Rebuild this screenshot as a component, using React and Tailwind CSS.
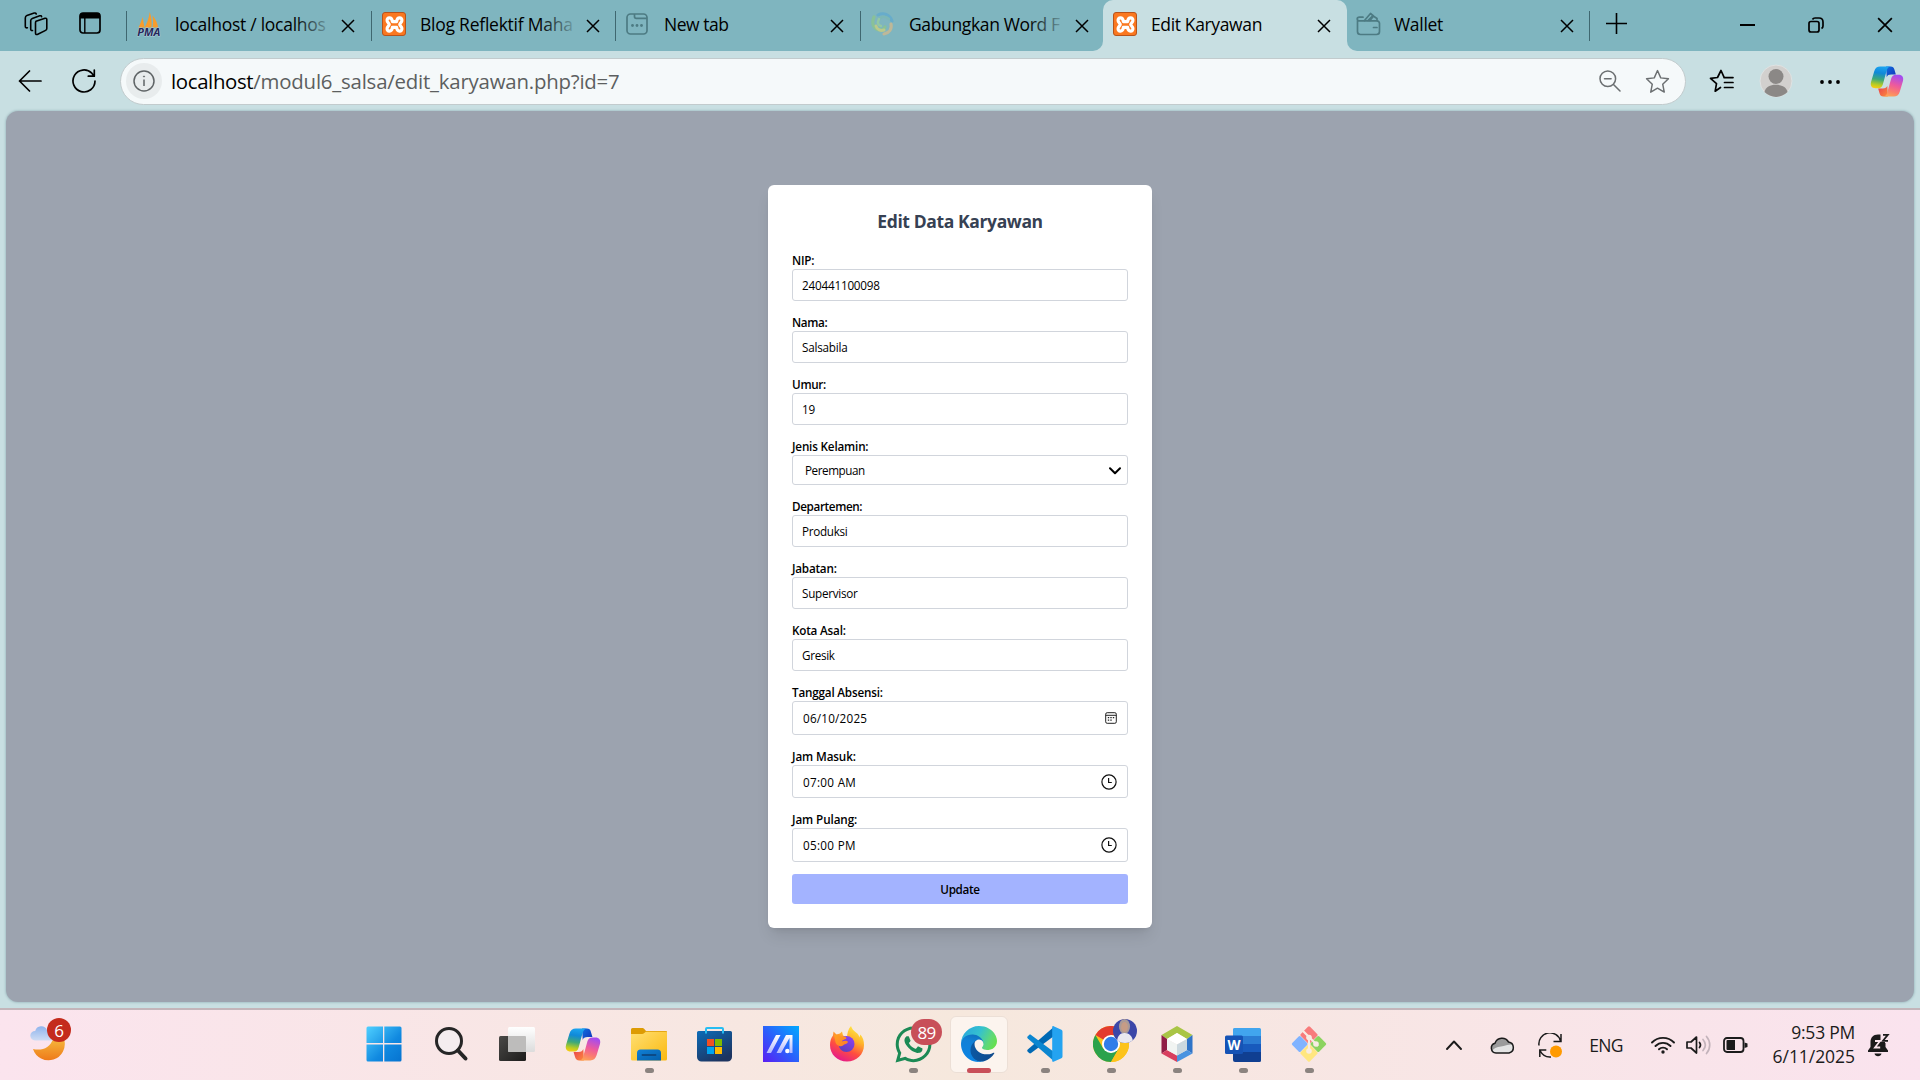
import { FaWhatsapp } from "react-icons/fa";

/* ---------- browser chrome icons ---------- */

const Close = ({ className = "w-[14px] h-[14px]" }) => (
  <svg viewBox="0 0 14 14" className={className} fill="none" stroke="#000" strokeWidth="1.5">
    <path d="M1 1l12 12M13 1L1 13" />
  </svg>
);

const Workspaces = () => (
  <svg viewBox="0 0 24 24" className="h-6 w-6" fill="none" stroke="#000" strokeWidth="1.6" strokeLinejoin="round" strokeLinecap="round">
    <path d="M12 9.3l9-3c1-.3 1.800 .2 1.800 1.200v9c0 .8-.4 1.500-1.200 1.900l-7.800 3.900c-1.200 .6-2.300 .1-2.300-1V11c0-.8 .3-1.400 .5-1.700z" />
    <path d="M8.500 18.500c-1.300 .2-1.800-.4-1.800-1.500V8.800c0-1.200 .5-2 1.600-2.400l7.400-2.600c1-.3 1.700 0 1.900 .8" />
    <path d="M3.400 15.800C2 16 1.300 15.400 1.300 14.200V6c0-1.200 .5-2 1.600-2.400l7.300-2.500c1-.3 1.700 0 2 .8" />
  </svg>
);

const TabActions = () => (
  <svg viewBox="0 0 22 22" className="h-[22px] w-[22px]">
    <rect x="1" y="1" width="20" height="20" rx="3" fill="none" stroke="#000" strokeWidth="1.700" />
    <path d="M1 6.500V3.500A2.500 2.500 0 013.500 1h15A2.500 2.500 0 0121 3.500v3z" fill="#000" />
    <path d="M5.800 6v15" stroke="#000" strokeWidth="1.400" />
  </svg>
);

const PmaIcon = () => (
  <svg viewBox="0 0 24 24" className="h-6 w-6 overflow-visible">
    <path d="M1.500 15.500C3 13 4.500 9 5.500 5l2 10.500zM7.500 15.500c2-3 4.500-9.500 5.200-15.500 1.800 5 2.300 10.500 1.800 15.500zM15.500 15.500c.6-3.500 .8-8 0-12 3 3.500 5.200 8 5.700 12z" fill="#f89c2c" />
    <text x=".3" y="23.500" fontSize="10" fontWeight="700" fontStyle="italic" fontFamily="Open Sans, sans-serif" fill="#26285c" stroke="#dfe6ee" strokeWidth=".5" paintOrder="stroke" textLength="23" lengthAdjust="spacingAndGlyphs">PMA</text>
  </svg>
);

const XamppIcon = () => (
  <span className="flex h-6 w-6 items-center justify-center rounded-[3px] border border-[#b8531a] bg-[#fa7820]">
    <svg viewBox="0 0 18 18" className="h-[19px] w-[19px]" fill="none" stroke="#fff" strokeWidth="3" strokeLinejoin="round">
      <path d="M7 6.300C6.500 1.500 1.500 2 2 5.500 2.300 7.500 3.800 7.500 4 9c-.2 1.500-1.700 1.500-2 3.500-.5 3.500 4.500 4 5-.8h4c.5 4.800 5.500 4.300 5 .8-.3-2-1.800-2-2-3.500 .2-1.500 1.700-1.500 2-3.500C16.500 2 11.500 1.500 11 6.300z" />
    </svg>
  </span>
);

const NewTabIcon = () => (
  <svg viewBox="0 0 24 24" className="h-6 w-6" fill="none" stroke="#4d7b83" strokeWidth="1.700">
    <rect x="1" y="2" width="20" height="20" rx="3.500" />
    <path d="M8.500 2v2.500c0 1.200 .7 1.800 1.800 1.800h10.500" />
    <g fill="#4d7b83" stroke="none"><circle cx="6.500" cy="13.500" r="1.400" /><circle cx="11" cy="13.500" r="1.400" /><circle cx="15.500" cy="13.500" r="1.400" /></g>
  </svg>
);

const SwirlIcon = () => (
  <svg viewBox="0 0 24 24" className="h-6 w-6" fill="none" strokeLinecap="round" opacity=".75">
    <path d="M3 5C0 12 3 18 9 18c3 0 4.500-1.500 5-3" stroke="#8dc58b" strokeWidth="3.200" />
    <path d="M5 14c1 4 5 5 8 4" stroke="#cfd07a" strokeWidth="3" />
    <path d="M7 3c6-3 12 0 14 6" stroke="#5fa9cf" strokeWidth="3" />
    <path d="M8 8c1-4 7-4 10-1" stroke="#7cb8b4" strokeWidth="2.500" />
    <path d="M20 12c1 5-2 9-7 10" stroke="#d3b98c" strokeWidth="3.200" />
    <path d="M8 7c-2 4-1 6 2 7" stroke="#9ccf9c" strokeWidth="2.500" />
  </svg>
);

const WalletIcon = () => (
  <svg viewBox="0 0 26 24" className="h-6 w-[26px]" fill="none" stroke="#4d7b83" strokeWidth="1.700" strokeLinejoin="round" strokeLinecap="round">
    <path d="M1.500 8.500v11c0 2 1 3 3 3h16c2 0 3-1 3-3v-8c0-1.700-1-2.700-2.700-2.700H3.500C2 8.800 1.200 8 1.200 7S2 5.200 3.500 5.200H7" />
    <path d="M8.500 8.500l6-7 3 2.500-3.500 4.500M12 8.500l4-4M18 4.500l3 2v2M17.500 15.500h3.500" />
  </svg>
);

const CopilotIcon = ({ className, id }) => (
  <svg viewBox="0 0 36 34" className={className}>
    <defs>
      <linearGradient id={`${id}a`} x1=".5" y1="0" x2=".35" y2="1">
        <stop offset="0" stopColor="#1ba4f0" /><stop offset=".3" stopColor="#1089d8" /><stop offset=".6" stopColor="#3fa978" /><stop offset=".85" stopColor="#b9cc22" /><stop offset="1" stopColor="#f5cc12" />
      </linearGradient>
      <linearGradient id={`${id}b`} x1=".6" y1="0" x2=".3" y2="1">
        <stop offset="0" stopColor="#a34cf0" /><stop offset=".45" stopColor="#ee5a9c" /><stop offset=".75" stopColor="#fa7d6e" /><stop offset="1" stopColor="#fda456" />
      </linearGradient>
      <linearGradient id={`${id}c`} x1="0" y1="0" x2="1" y2="1">
        <stop offset="0" stopColor="#0f6fe0" /><stop offset="1" stopColor="#1333b8" />
      </linearGradient>
      <linearGradient id={`${id}d`} x1="0" y1="0" x2="1" y2="1">
        <stop offset="0" stopColor="#e83d50" /><stop offset="1" stopColor="#fd8b3c" />
      </linearGradient>
    </defs>
    <path d="M17 .5h5c2.300 0 3.500 1 4.200 3.500l1.500 5.300h-5c-3 0-4.200 .8-5 3z" fill={`url(#${id}c)`} />
    <path d="M19 33.500h-5c-2.300 0-3.500-1-4.200-3.500l-1.500-5.300h5c3 0 4.200-.8 5-3z" fill={`url(#${id}d)`} />
    <path d="M10.500 .5H22c-2.500 .3-3.600 2-4.500 5l-4 14.500c-.9 3-2.400 4.300-5.400 4.300H5.300C1.200 24.300-.5 21.500 .5 17.500L4 5.800C5.200 2 7.300 .5 10.500 .5z" fill={`url(#${id}a)`} />
    <path d="M25.500 33.500H14c2.500-.3 3.600-2 4.500-5l4-14.500c.9-3 2.400-4.300 5.400-4.300h2.800c4.100 0 5.800 2.800 4.800 6.800L32 28.200c-1.200 3.800-3.300 5.300-6.500 5.300z" fill={`url(#${id}b)`} />
  </svg>
);

const STAR = "M12 1.500l3.100 7 7.400 .9-5.500 5.200 1.500 7.600L12 18.400l-6.500 3.800 1.500-7.600L1.500 9.400l7.400-.9z";

/* ---------- tab strip ---------- */

function Tab({ icon, title, tracking, fade }) {
  return (
    <div className="flex h-full w-full items-center pb-[3px] pl-[10px]">
      <span className="flex w-[38px] shrink-0">{icon}</span>
      <span className={`relative mb-px w-[155px] shrink-0 overflow-hidden whitespace-nowrap text-[17.5px] leading-6 text-black ${tracking}`}>
        {title}
        {fade && <span className="absolute inset-y-0 right-0 w-9 bg-gradient-to-r from-[#7fb5bf]/0 to-[#7fb5bf]/90" />}
      </span>
      <span className="ml-[11px] mt-[3px]"><Close /></span>
    </div>
  );
}

const Divider = () => <span className="mt-[11px] h-[30px] w-px shrink-0 bg-[#3f6770]" />;

function TabStrip() {
  return (
    <div className="flex h-[51px] bg-[#c8dfe2]">
      <div className="flex w-[1103px] rounded-br-[10px] bg-[#7fb5bf]">
        <div className="flex w-[126px] shrink-0 items-start gap-[31px] pl-6 pt-3">
          <Workspaces />
          <TabActions />
        </div>
        <Divider />
        <div className="w-[244px]"><Tab icon={<PmaIcon />} title="localhost / localhos" tracking="tracking-[-0.26px]" fade /></div>
        <Divider />
        <div className="w-[243px]"><Tab icon={<XamppIcon />} title="Blog Reflektif Maha" tracking="tracking-[-0.24px]" fade /></div>
        <Divider />
        <div className="w-[244px]"><Tab icon={<NewTabIcon />} title="New tab" tracking="tracking-[-0.46px]" /></div>
        <Divider />
        <div className="w-[242px]"><Tab icon={<SwirlIcon />} title="Gabungkan Word F" tracking="tracking-[-0.36px]" fade /></div>
      </div>
      <div className="w-[244px] bg-[#7fb5bf]">
        <div className="h-full rounded-t-[10px] bg-[#c8dfe2]">
          <Tab icon={<XamppIcon />} title="Edit Karyawan" tracking="tracking-[-0.36px]" />
        </div>
      </div>
      <div className="flex flex-1 rounded-bl-[10px] bg-[#7fb5bf]">
        <div className="-ml-px w-[243px]">
          <Tab icon={<WalletIcon />} title="Wallet" tracking="tracking-[-0.3px]" />
        </div>
        <Divider />
        <svg viewBox="0 0 21 21" className="ml-4 mt-[13px] h-[21px] w-[21px]" stroke="#000" strokeWidth="1.600"><path d="M0 10.500h21M10.500 0v21" /></svg>
        <div className="mr-[27px] mt-[17px] flex flex-1 items-start justify-end">
          <svg viewBox="0 0 15 16" className="mr-[53px] h-4 w-[15px]" stroke="#000" strokeWidth="2"><path d="M0 8h15" /></svg>
          <svg viewBox="0 0 16 16" className="mr-[53px] h-4 w-4" fill="none" stroke="#000" strokeWidth="1.700">
            <rect x="1" y="4.500" width="10" height="10.500" rx="2" />
            <path d="M4.500 2.500C5 1.500 6 1 7 1h4c2.500 0 4 1.500 4 4v4c0 1.200-.6 2-1.500 2.500" />
          </svg>
          <Close className="h-4 w-4" />
        </div>
      </div>
    </div>
  );
}

/* ---------- toolbar ---------- */

function Toolbar() {
  return (
    <div className="flex h-[60px] items-center bg-[#c8dfe2] pl-[18px] pr-4">
      <svg viewBox="0 0 24 22" className="h-[22px] w-6" fill="none" stroke="#000" strokeWidth="1.700" strokeLinecap="round" strokeLinejoin="round"><path d="M23 11H1.500M11.500 1L1.500 11l10 10" /></svg>
      <svg viewBox="0 0 24 24" className="ml-[30px] h-6 w-6" fill="none" stroke="#000" strokeWidth="1.700" strokeLinecap="round" strokeLinejoin="round"><path d="M23 12a11 11 0 11-3.200-7.800L22 7M22.300 1v6.200h-6" /></svg>
      <div className="ml-6 flex h-[47px] w-[1566px] items-center rounded-full border-[1.5px] border-[#c2cbcd] bg-[#f5f9fa] pl-[5px] pr-[15px]">
        <span className="flex h-9 w-9 items-center justify-center rounded-full bg-[#e8eced]">
          <svg viewBox="0 0 22 22" className="h-[22px] w-[22px]" fill="none" stroke="#5f6466" strokeWidth="1.500"><circle cx="11" cy="11" r="10" /><path d="M11 9.500v6.500" /><circle cx="11" cy="6.500" r=".6" fill="#5f6466" strokeWidth=".8" /></svg>
        </span>
        <span className="ml-[9px] flex-1 whitespace-nowrap text-[20.4px] leading-7 tracking-[-0.2px] text-[#5c5f60]">
          <span className="tracking-[-0.35px] text-black">localhost</span>/modul6_salsa/edit_karyawan.php?id=7
        </span>
        <svg viewBox="0 0 22 22" className="h-[22px] w-[22px]" fill="none" stroke="#6b6f71" strokeWidth="1.500" strokeLinecap="round"><circle cx="8.800" cy="8.800" r="7.800" /><path d="M14.500 14.500l6.500 6.500M5.500 8.800h6.600" /></svg>
        <svg viewBox="0 0 24 24" className="ml-[24px] h-[25px] w-[25px]" fill="none" stroke="#6b6f71" strokeWidth="1.400" strokeLinejoin="round"><path d={STAR} /></svg>
      </div>
      <svg viewBox="0 0 25 24" className="ml-[23px] h-6 w-[25px]" fill="none" stroke="#000" strokeWidth="1.700" strokeLinejoin="round" strokeLinecap="round">
        <path d="M11.500 18.500l-5.300 3.700 1.300-7.500L1.500 9.400l7-.9L12 1.500l3 6.700M15 8.600h9M15.500 13.500H24M15.500 18.500H24" />
      </svg>
      <svg viewBox="0 0 34 34" className="ml-[25px] h-[34px] w-[34px]">
        <circle cx="17" cy="17" r="16" fill="#d2d0ce" stroke="#dfe3e3" />
        <circle cx="17" cy="12.500" r="7.500" fill="#8b8886" />
        <path d="M5.500 28c1-5 5.500-7.200 11.500-7.200S27.500 23 28.500 28a16 16 0 01-23 0z" fill="#8b8886" />
      </svg>
      <svg viewBox="0 0 22 6" className="ml-[26px] mt-[2px] h-[6px] w-[22px]" fill="#000"><circle cx="3" cy="3" r="1.900" /><circle cx="11" cy="3" r="1.900" /><circle cx="19" cy="3" r="1.900" /></svg>
      <CopilotIcon id="tb" className="ml-[29px] h-[31px] w-[34px]" />
    </div>
  );
}

/* ---------- form ---------- */

const Calendar = () => (
  <svg viewBox="0 0 12 12" className="mr-[10px] h-3 w-3" fill="none" stroke="#222" strokeWidth="1">
    <rect x=".7" y=".7" width="10.600" height="10.600" rx="1.500" /><path d="M.7 3.300h10.600" />
    <path d="M2.800 5.700h1.400M5.300 5.700h1.400M7.800 5.700h1.400M2.800 8.200h1.400M5.300 8.200h1.400" strokeWidth="1.300" />
  </svg>
);

const Clock = () => (
  <svg viewBox="0 0 16 16" className="mr-[10px] h-4 w-4" fill="none" stroke="#111" strokeWidth="1.200">
    <circle cx="8" cy="8" r="7.100" /><path d="M7.600 4v4.500h3.200" />
  </svg>
);

const Chevron = () => (
  <svg viewBox="0 0 12 8" className="mr-[6px] mt-px h-2 w-3" fill="none" stroke="#000" strokeWidth="2" strokeLinecap="round" strokeLinejoin="round"><path d="M1 1.300l5 5 5-5" /></svg>
);

const FIELDS = [
  { label: "NIP:", lt: "tracking-[-0.25px]", value: "240441100098", vt: "pl-[9px] tracking-[-0.2px]", h: "h-8" },
  { label: "Nama:", lt: "tracking-[-0.35px]", value: "Salsabila", vt: "pl-[9px] tracking-[-0.22px]", h: "h-8" },
  { label: "Umur:", lt: "tracking-[-0.3px]", value: "19", vt: "pl-[9px] tracking-[-0.2px]", h: "h-8" },
  { label: "Jenis Kelamin:", lt: "tracking-[-0.18px]", value: "Perempuan", vt: "pl-3 tracking-[-0.45px]", h: "h-[30px]", icon: <Chevron /> },
  { label: "Departemen:", lt: "tracking-[-0.37px]", value: "Produksi", vt: "pl-[9px] tracking-[-0.3px]", h: "h-8" },
  { label: "Jabatan:", lt: "tracking-[-0.22px]", value: "Supervisor", vt: "pl-[9px] tracking-[-0.27px]", h: "h-8" },
  { label: "Kota Asal:", lt: "tracking-[-0.2px]", value: "Gresik", vt: "pl-[9px] tracking-[-0.3px]", h: "h-8" },
  { label: "Tanggal Absensi:", lt: "tracking-[-0.19px]", value: "06/10/2025", vt: "pl-[10px] tracking-[0.22px]", h: "h-[34px]", icon: <Calendar /> },
  { label: "Jam Masuk:", lt: "tracking-[-0.12px]", value: "07:00 AM", vt: "pl-[10px] tracking-[0.3px]", h: "h-[33px]", icon: <Clock /> },
  { label: "Jam Pulang:", lt: "tracking-[-0.1px]", value: "05:00 PM", vt: "pl-[10px] tracking-[0.3px]", h: "h-[34px]", icon: <Clock /> },
];

function EditForm() {
  return (
    <form className="flex w-96 flex-col rounded-md bg-white p-6 shadow-lg">
      <h2 className="mb-[18px] text-center text-[17.5px] font-bold leading-6 tracking-[-0.38px] text-gray-700">Edit Data Karyawan</h2>
      <div className="flex flex-col gap-3">
        {FIELDS.map((f) => (
          <div key={f.label}>
            <div className={`h-[18px] text-[11.7px] font-semibold leading-[19px] text-black ${f.lt}`}>{f.label}</div>
            <div className={`flex items-center justify-between rounded-[3px] border border-gray-300 bg-white ${f.h}`}>
              <span className={`text-[11.7px] leading-4 text-black ${f.vt}`}>{f.value}</span>
              {f.icon}
            </div>
          </div>
        ))}
        <button type="button" className="h-[30px] rounded-[3px] bg-indigo-300 pt-[2px] text-[11.7px] font-semibold tracking-[-0.35px] text-black">Update</button>
      </div>
    </form>
  );
}

/* ---------- taskbar icons ---------- */

const Weather = () => (
  <div className="relative ml-[30px] mt-[8px] h-[44px] w-[42px]">
    <svg viewBox="0 0 42 44" className="h-[44px] w-[42px]">
      <defs>
        <linearGradient id="moon" x1="0" y1="0" x2="0" y2="1"><stop offset="0" stopColor="#f6b73c" /><stop offset="1" stopColor="#ee7a1a" /></linearGradient>
        <linearGradient id="cloud" x1="0" y1="0" x2="0" y2="1"><stop offset="0" stopColor="#8fb4ec" /><stop offset="1" stopColor="#cfdcf4" /></linearGradient>
      </defs>
      <path d="M3 31c9 2 17-1 20-10h11a15.500 15.500 0 01-31 10z" fill="url(#moon)" />
      <path d="M5 22.500a4.800 4.800 0 01.200-9.600A6.300 6.300 0 0117 12l6 10.500z" fill="url(#cloud)" />
    </svg>
    <span className="absolute left-[17px] top-0 flex h-6 w-6 items-center justify-center rounded-full bg-[#c42b1c] text-[17px] leading-none text-white">6</span>
  </div>
);

const StartIcon = () => (
  <svg viewBox="0 0 36 36" className="-ml-[3px] h-9 w-9">
    <defs><linearGradient id="win" x1="0" y1="0" x2="1" y2="1"><stop offset="0" stopColor="#4fd0ff" /><stop offset=".6" stopColor="#1089e0" /><stop offset="1" stopColor="#0673d0" /></linearGradient></defs>
    <path d="M2 .5h15v16.500H.5V2A1.500 1.500 0 012 .5zM18.300 .5H34A1.500 1.500 0 0135.500 2v15H18.300zM.5 18.500H17v17H2A1.500 1.500 0 01.5 34zM18.300 18.500h17.200V34a1.500 1.500 0 01-1.500 1.500H18.300z" fill="url(#win)" />
  </svg>
);

const SearchIcon = () => (
  <svg viewBox="0 0 36 36" className="h-9 w-9" fill="none" stroke="#262626" strokeLinecap="round">
    <circle cx="16" cy="15" r="12.500" fill="#f4edef" strokeWidth="3" /><path d="M25 24.500l7.500 8" strokeWidth="4" />
  </svg>
);

const TaskView = () => (
  <svg viewBox="0 0 36 36" className="h-9 w-9">
    <defs>
      <linearGradient id="tvd" x1="0" y1="0" x2="1" y2="1"><stop offset="0" stopColor="#4a4947" /><stop offset="1" stopColor="#1d1c1b" /></linearGradient>
      <linearGradient id="tvl" x1="0" y1="0" x2="0" y2="1"><stop offset="0" stopColor="#fff" /><stop offset="1" stopColor="#dcdcdc" /></linearGradient>
    </defs>
    <rect x="0" y="10" width="27" height="25" rx="1.500" fill="url(#tvd)" />
    <rect x="9" y="1" width="27" height="25" rx="1.500" fill="url(#tvl)" />
    <path d="M9 10h17a1 1 0 011 1v15H10.500A1.500 1.500 0 019 24.500z" fill="#bdbcbb" />
  </svg>
);

const Explorer = () => (
  <svg viewBox="0 0 36 36" className="h-9 w-9">
    <defs><linearGradient id="fold" x1="0" y1="0" x2="1" y2="1"><stop offset="0" stopColor="#ffdf73" /><stop offset="1" stopColor="#fbb90f" /></linearGradient>
      <linearGradient id="drawer" x1="0" y1="0" x2="1" y2="1"><stop offset="0" stopColor="#1180d6" /><stop offset="1" stopColor="#0560ac" /></linearGradient></defs>
    <path d="M0 3.500A1.500 1.500 0 011.500 2H11c1 0 1.600 .3 2.300 1L15 5h20a1 1 0 011 1v4H0z" fill="#dd9b04" />
    <path d="M0 8h10.500c1.200 0 2-.3 2.800-1.100L14.800 5.800H35a1 1 0 011 1V33a1.500 1.500 0 01-1.500 1.500h-33A1.500 1.500 0 010 33z" fill="url(#fold)" />
    <path d="M6 34.500V27a3.500 3.500 0 013.500-3.500h17A3.500 3.500 0 0130 27v7.500z" fill="url(#drawer)" />
    <path d="M11.500 29h13" stroke="#0c4a86" strokeWidth="1.800" strokeLinecap="round" />
  </svg>
);

const Store = () => (
  <svg viewBox="0 0 36 36" className="h-9 w-9">
    <defs><linearGradient id="store" x1="0" y1="0" x2=".6" y2="1"><stop offset="0" stopColor="#0c6cb8" /><stop offset="1" stopColor="#1d3460" /></linearGradient></defs>
    <path d="M1.500 5h32a1.500 1.500 0 011.500 1.500V31a4.500 4.500 0 01-4.500 4.500h-26A4.500 4.500 0 010 31V6.500A1.500 1.500 0 011.500 5z" fill="url(#store)" />
    <path d="M9 7.500V3a1 1 0 011-1h15a1 1 0 011 1v4.500" fill="none" stroke="#27bdf2" strokeWidth="2" />
    <path d="M10 13h7v7h-7z" fill="#f25022" /><path d="M18 13h7v7h-7z" fill="#7fba00" /><path d="M10 21h7v7h-7z" fill="#00a4ef" /><path d="M18 21h7v7h-7z" fill="#ffb900" />
  </svg>
);

const MyAsus = () => (
  <svg viewBox="0 0 36 36" className="h-9 w-9">
    <defs><linearGradient id="asus" x1="0" y1="1" x2="1" y2="0"><stop offset="0" stopColor="#5b1df2" /><stop offset=".45" stopColor="#2e5bfb" /><stop offset="1" stopColor="#00aaff" /></linearGradient>
      <linearGradient id="asw" x1="0" y1="1" x2="0" y2="0"><stop offset="0" stopColor="#b3b9ff" /><stop offset="1" stopColor="#fff" /></linearGradient></defs>
    <path d="M0 0h36v36H0z" fill="url(#asus)" />
    <path d="M3.500 27L13 9h4.500L8 27zM13.500 27L23 9h6.500v18h-3V12L18 27z" fill="url(#asw)" />
    <circle cx="24.300" cy="25" r="2.200" fill="#fff" />
  </svg>
);

const Firefox = () => (
  <svg viewBox="0 0 36 36" className="h-9 w-9">
    <defs>
      <linearGradient id="ff" x1=".8" y1="0" x2=".3" y2="1"><stop offset="0" stopColor="#fff04a" /><stop offset=".35" stopColor="#ffb22a" /><stop offset=".65" stopColor="#ff4f3f" /><stop offset="1" stopColor="#e4178f" /></linearGradient>
      <linearGradient id="ffp" x1=".8" y1="0" x2=".2" y2="1"><stop offset="0" stopColor="#8f3ff5" /><stop offset="1" stopColor="#5a3fb8" /></linearGradient>
      <linearGradient id="ffo" x1="0" y1="0" x2="1" y2="1"><stop offset="0" stopColor="#ffa21f" /><stop offset="1" stopColor="#ff7a2a" /></linearGradient>
    </defs>
    <path d="M22 0c1 3 2.500 4.500 5 6.500 2.500 1.800 3.300 3.800 3.500 5l.8-3C34 11 35 15 35 19c0 9.500-7.500 16.500-17 16.500S1 28.500 1 19c0-4 1-7 3-9.500l.5-4 3 3 3.500-1 2-2 1 4c2 .5 3 1.500 4 2.500 0-4 1-9 4-12z" fill="url(#ff)" />
    <circle cx="17.500" cy="18" r="8" fill="url(#ffp)" />
    <path d="M5 9c3-.5 5 0 7 1.500 2.500-.5 5 .5 5.500 1.500-.5 1.500-4 1.500-4.500 3.500 2-1 5.500-1 6 .5-1 2.500-3.500 1.500-5 3.500-2 2-7 0-7.500-3.500z" fill="url(#ffo)" />
  </svg>
);

const WhatsApp = () => (
  <div className="relative h-9 w-9">
    <FaWhatsapp className="-ml-[2px] -mt-[2px] h-[41px] w-[41px] text-[#1b8a55]" />
    <span className="absolute -top-[7px] left-[16px] flex h-[26px] w-[31px] items-center justify-center rounded-full bg-[#c84f59] text-[17px] leading-none tracking-[-0.6px] text-white">89</span>
  </div>
);

const Edge = () => (
  <svg viewBox="0 0 256 256" className="h-9 w-9">
    <defs>
      <linearGradient id="e1" x1="0" y1=".5" x2="1" y2=".5"><stop offset="0" stopColor="#0c59a4" /><stop offset="1" stopColor="#114a8b" /></linearGradient>
      <linearGradient id="e2" x1=".6" y1="0" x2=".4" y2="1"><stop offset="0" stopColor="#0f6fb8" /><stop offset=".3" stopColor="#1180d6" /><stop offset="1" stopColor="#0b84e4" /></linearGradient>
      <linearGradient id="e3" x1="0" y1=".3" x2="1" y2=".65"><stop offset="0" stopColor="#2aa8dc" /><stop offset=".45" stopColor="#35c1cf" /><stop offset=".8" stopColor="#5fd977" /><stop offset="1" stopColor="#66e04e" /></linearGradient>
    </defs>
    <path fill="url(#e1)" d="M231 190.500c-3.400 1.800-6.900 3.400-10.500 4.700-11.500 4.300-23.600 6.500-35.900 6.500-47.300 0-88.500-32.500-88.500-74.300.1-11.400 6.400-21.900 16.400-27.300-42.800 1.800-53.800 46.400-53.800 72.500 0 73.900 68.100 81.400 82.800 81.400 7.900 0 19.800-2.300 27-4.600l1.300-.4c27.600-9.500 51-28.100 66.600-52.800 1.200-1.900.6-4.300-1.200-5.500-1.300-.8-2.900-.9-4.200-.2z" />
    <path fill="url(#e2)" d="M105.700 241.400c-8.900-5.500-16.600-12.800-22.700-21.300-26.300-36-18.400-86.500 17.600-112.800 3.800-2.700 7.700-5.200 11.900-7.200 3.100-1.500 8.400-4.100 15.500-4 10.100.1 19.600 4.900 25.700 13 4 5.400 6.300 11.900 6.400 18.700 0-.2 24.500-79.600-80-79.600-43.900 0-80 41.700-80 78.200-.2 19.300 4 38.500 12.100 56 27.600 58.800 94.800 87.600 156.400 67.100-21.100 6.600-44.100 3.700-62.900-8.100z" />
    <path fill="url(#e3)" d="M152.300 148.900c-.8 1-3.300 2.500-3.300 5.700 0 2.600 1.700 5.100 4.700 7.200 14.400 10 41.500 8.700 41.600 8.700 10.700 0 21.100-2.900 30.300-8.300 18.800-11 30.400-31.100 30.400-52.900.3-22.400-8-37.300-11.300-43.900C223.500 23.900 177.700 0 128 0 58 0 1 56.200 0 126.200c.5-36.500 36.800-66 80-66 3.500 0 23.500.3 42 10.100 16.300 8.600 24.900 18.900 30.800 29.200 6.200 10.700 7.300 24.100 7.300 29.500-.1 5.300-2.800 13.300-7.800 19.900z" />
  </svg>
);

const VsCode = () => (
  <svg viewBox="0 0 36 36" className="h-9 w-9">
    <path d="M.8 23.500a1.600 1.600 0 000 2.300l1.300 1.200c.6 .5 1.400 .5 2 .1L27 10V.8z" fill="#0069b4" />
    <path d="M.8 12.500a1.600 1.600 0 010-2.300L2.100 9c.6-.5 1.400-.5 2-.1L27 26v9.200z" fill="#0b86d0" />
    <path d="M26.500 35.700c-.8 .3-1.300-.2-1.300-1V1.300c0-.9 .6-1.400 1.400-1.100l7.800 3.600A2 2 0 0135.500 5.600v24.800a2 2 0 01-1.100 1.800z" fill="#24a3f0" />
  </svg>
);

const Chrome = () => (
  <div className="relative h-9 w-9">
    <svg viewBox="0 0 36 36" className="h-9 w-9">
      <circle cx="18" cy="18" r="18" fill="#fcc31c" />
      <path d="M18 18L2.400 9A18 18 0 0133.600 9H18z" fill="#e33b2e" />
      <path d="M2.400 9l7.800 13.500L18 27l7.800-4.500L18 36A18 18 0 012.400 9z" fill="#2ba24c" />
      <path d="M25.800 22.500L18 36A18 18 0 0033.600 9H18z" fill="#fcc31c" />
      <circle cx="18" cy="18" r="9" fill="#fff" /><circle cx="18" cy="18" r="7.200" fill="#2f7de9" />
    </svg>
    <svg viewBox="0 0 24 24" className="absolute -top-[7px] left-5 h-6 w-6">
      <defs><clipPath id="avatar"><circle cx="12" cy="12" r="12" /></clipPath></defs>
      <g clipPath="url(#avatar)">
        <path d="M0 0h24v24H0z" fill="#3c47a8" />
        <ellipse cx="11.500" cy="7.500" rx="5.500" ry="7.500" fill="#a99a98" />
        <path d="M4 24c0-7 3-10 7.500-10S20 17 20 24z" fill="#e9e8ef" />
        <ellipse cx="11.500" cy="8" rx="3.400" ry="5" fill="#c69c86" />
      </g>
    </svg>
  </div>
);

const NetBeans = () => (
  <svg viewBox="0 0 36 36" className="h-9 w-9">
    <path d="M18 0l15.500 9-5.500 4-10-6-10 6-5.500-4z" fill="#a9c545" />
    <path d="M2.500 9L8 13v11l-5.500 3.500z" fill="#8f1d45" />
    <path d="M2.500 27.500L8 24l10 5.500V36z" fill="#d83f5f" />
    <path d="M33.500 9L28 13v11l5.500 3.500z" fill="#2f74c8" />
    <path d="M33.500 27.500L28 24l-10 5.500V36z" fill="#4a93e0" />
    <path d="M18 7l10 6-10 5.500L8 13z" fill="#fff" /><path d="M8 13l10 5.500v11L8 24z" fill="#f1f4f2" /><path d="M28 13l-10 5.500v11L28 24z" fill="#cbd8df" />
  </svg>
);

const Word = () => (
  <svg viewBox="0 0 36 36" className="h-9 w-9">
    <path d="M10 2h24.500A1.500 1.500 0 0136 3.500V10H8V3.500A1.500 1.500 0 0110 2z" fill="#41a5ee" /><path d="M8 10h28v8H8z" fill="#2b7cd3" /><path d="M8 18h28v8H8z" fill="#185abd" /><path d="M8 26h28v8.500a1.500 1.500 0 01-1.500 1.500H10a2 2 0 01-2-2z" fill="#103f91" />
    <rect x="0" y="9.500" width="18" height="18.500" rx="1.500" fill="#1553b5" />
    <text x="9" y="23.500" textAnchor="middle" fontSize="13.500" fontWeight="700" fontFamily="Open Sans, sans-serif" fill="#fff">W</text>
  </svg>
);

const GitBash = () => (
  <svg viewBox="0 0 36 36" className="h-9 w-9">
    <rect x="-6.500" y="-6.500" width="13" height="13" rx="1.500" transform="translate(18 9) rotate(45)" fill="#f87b7b" />
    <rect x="-6" y="-6" width="12" height="12" rx="1.500" transform="translate(8.700 18) rotate(45)" fill="#80b3ff" />
    <rect x="-6" y="-6" width="12" height="12" rx="1.500" transform="translate(27.300 18) rotate(45)" fill="#8cd35f" />
    <rect x="-6.500" y="-6.500" width="13" height="13" rx="1.500" transform="translate(18 27) rotate(45)" fill="#ffe680" />
    <path d="M11.500 4.500L27 20M18 11v15" stroke="#f8ebe2" strokeWidth="2.200" fill="none" />
    <circle cx="18" cy="11.500" r="2.800" fill="#f8ebe2" /><circle cx="25" cy="18" r="2.800" fill="#f8ebe2" /><circle cx="18" cy="25" r="2.800" fill="#f8ebe2" />
  </svg>
);

const APPS = [
  { name: "start", icon: <StartIcon /> },
  { name: "search", icon: <SearchIcon /> },
  { name: "taskview", icon: <TaskView /> },
  { name: "copilot", icon: <CopilotIcon id="task" className="h-[33px] w-9" /> },
  { name: "explorer", icon: <Explorer />, running: true },
  { name: "store", icon: <Store /> },
  { name: "myasus", icon: <MyAsus /> },
  { name: "firefox", icon: <Firefox /> },
  { name: "whatsapp", icon: <WhatsApp />, running: true },
  { name: "edge", icon: <Edge />, active: true },
  { name: "vscode", icon: <VsCode />, running: true },
  { name: "chrome", icon: <Chrome />, running: true },
  { name: "netbeans", icon: <NetBeans />, running: true },
  { name: "word", icon: <Word />, running: true },
  { name: "git", icon: <GitBash />, running: true },
];

function Tray() {
  return (
    <div className="flex h-[70px] items-center text-[#1b1b1b]">
      <svg viewBox="0 0 16 10" className="h-[10px] w-4" fill="none" stroke="#1b1b1b" strokeWidth="1.900" strokeLinecap="round" strokeLinejoin="round"><path d="M1 9l7-7.500L15 9" /></svg>
      <svg viewBox="0 0 25 17" className="ml-[28px] h-[17px] w-[25px]">
        <path d="M6 16a5 5 0 01-1-9.800A7.500 7.500 0 0118.500 5 5.600 5.600 0 0119 16z" fill="#9b9b9b" />
        <path d="M2 14.500c1-3 5-4.500 9-5 4-.5 8-2.500 11-2 2 1.500 2.500 8.500-3 8.500H6c-2 0-3-.5-4-1.500z" fill="#e3e3e3" />
        <path d="M6 16a5 5 0 01-1-9.800A7.500 7.500 0 0118.500 5 5.600 5.600 0 0119 16z" fill="none" stroke="#1b1b1b" strokeWidth="1.500" />
      </svg>
      <svg viewBox="0 0 24 25" className="ml-[23px] h-[25px] w-6" fill="none" stroke="#1b1b1b" strokeWidth="1.500">
        <path d="M1 12.500A11 11 0 0122.500 8M23 1v7.500h-7.500M1.800 24v-7h6.500M2 17.500c2 4 6 7 11 6.500" />
        <circle cx="18" cy="18.500" r="6" fill="#ff9a00" stroke="none" />
      </svg>
      <span className="ml-[27px] mb-px text-[17.5px] leading-6 tracking-[-0.6px]">ENG</span>
      <svg viewBox="0 0 24 18" className="ml-[28px] h-[18px] w-6" fill="none" stroke="#1b1b1b" strokeWidth="1.900" strokeLinecap="round">
        <path d="M1 6.500a15.500 15.500 0 0122 0M4.500 10a10.500 10.500 0 0115 0M8 13.300a5.700 5.700 0 018 0" /><circle cx="12" cy="16" r="1.700" fill="#1b1b1b" stroke="none" />
      </svg>
      <svg viewBox="0 0 25 20" className="ml-[11px] h-5 w-[25px]" fill="none" stroke="#1b1b1b" strokeWidth="1.700" strokeLinecap="round" strokeLinejoin="round">
        <path d="M1 7v6h4l5.500 5V2L5 7zM13.500 7.500c1.200 1.500 1.200 3.500 0 5" />
        <path d="M17 4.500c3 3.500 3 7.500 0 11M20.500 1.500c4.300 5 4.300 12 0 17" stroke="#c3b3bb" />
      </svg>
      <svg viewBox="0 0 25 16" className="ml-3 h-4 w-[25px]"><rect x="1" y="1" width="19.500" height="14" rx="3" fill="none" stroke="#1b1b1b" strokeWidth="1.800" /><path d="M3.500 4a1 1 0 011-1H12v10H4.500a1 1 0 01-1-1zM21.500 5.500l3 1v3.500l-3 1z" fill="#1b1b1b" /></svg>
      <div className="mb-[3px] ml-[23px] flex w-[84px] flex-col items-end whitespace-nowrap text-[17.500px] leading-6">
        <span className="tracking-[-0.24px]">9:53 PM</span>
        <span className="tracking-[-0.05px]">6/11/2025</span>
      </div>
      <svg viewBox="0 0 22 24" className="ml-[13px] h-6 w-[22px]">
        <path d="M10 1.500c-5 0-7.500 3.500-7.500 7.500v5L0 17.500V19h20v-1.500L17.500 14V1.500zM6.500 20.500h7a3.600 3.600 0 01-7 0z" fill="#1b1b1b" />
        <path d="M7 8h5l-5 6.500h5.200" fill="none" stroke="#f9e3ec" strokeWidth="1.800" />
        <path d="M12.500 0H22v10h-5v-1h-4.500z" fill="#f9e3ec" /><path d="M15 1.800h4.800L15 7.800h5" fill="none" stroke="#1b1b1b" strokeWidth="1.800" />
      </svg>
    </div>
  );
}

function Taskbar() {
  return (
    <div className="flex h-[72px] border-t-2 border-[#c3b5ba] bg-gradient-to-r from-[#fbe4ee] via-[#f6e8dd] to-[#fae3ee]">
      <div className="w-[352px] shrink-0"><Weather /></div>
      <div className="flex">
        {APPS.map((a) => (
          <div key={a.name} className="flex w-[66px] justify-center pt-[6px]">
            <div className={a.active ? "flex h-[57px] w-[58px] flex-col items-center rounded-md border border-[#ecdfd6] bg-[#fcf4ee] pt-[9px]" : "flex h-[57px] w-[58px] flex-col items-center border border-transparent pt-[9px]"}>
              <div className="flex h-9 w-9 shrink-0 items-center justify-center">{a.icon}</div>
              {a.running && <span className="mt-[6px] h-[5px] w-[9px] shrink-0 rounded-full bg-[#8b837f]" />}
              {a.active && <span className="mt-[6px] h-[5px] w-6 shrink-0 rounded-full bg-[#c84f59]" />}
            </div>
          </div>
        ))}
      </div>
      <div className="flex flex-1 justify-end pr-[30px]"><Tray /></div>
    </div>
  );
}

export default function App() {
  return (
    <div className="flex h-[1080px] w-[1920px] flex-col overflow-hidden bg-[#c8dfe2] font-['Open_Sans','Noto_Sans',sans-serif]">
      <TabStrip />
      <Toolbar />
      <main className="mx-[6px] flex h-[891px] items-start justify-center rounded-xl bg-[#9ca3af] pt-[74px] shadow-[0_0_2px_1px_#a9c4c9]">
        <EditForm />
      </main>
      <div className="h-[6px]" />
      <Taskbar />
    </div>
  );
}
